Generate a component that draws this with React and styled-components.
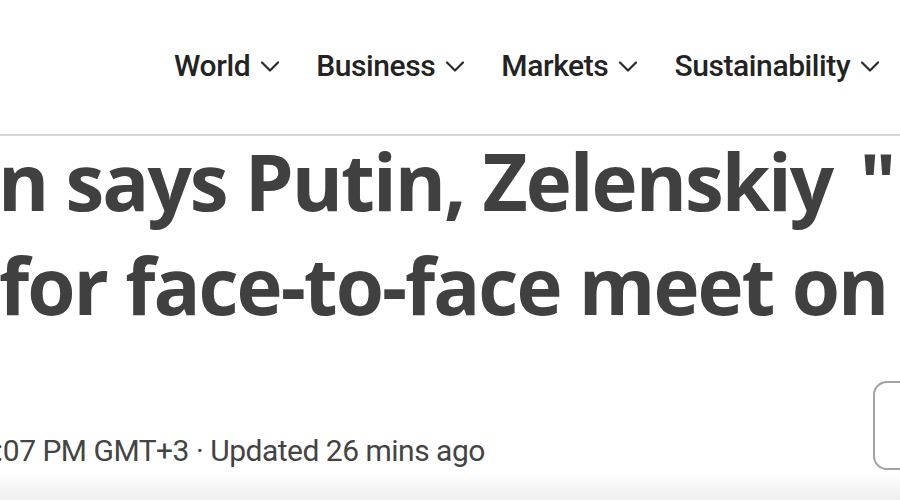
import React from "react";
import styled, { createGlobalStyle } from "styled-components";

const GlobalStyle = createGlobalStyle`
  html, body {
    margin: 0;
    padding: 0;
    background: #ffffff;
    overflow: hidden;
  }
`;

const Page = styled.div`
  width: 900px;
  height: 500px;
  display: flex;
  flex-direction: column;
  overflow: hidden;
  background: #fff;
`;

const Header = styled.header`
  height: 136px;
  display: flex;
  align-items: center;
  padding-left: 174px;
  padding-bottom: 4px;
  box-sizing: border-box;
  border-bottom: 2px solid #d6d6d6;
  gap: 35px;
  flex-shrink: 0;
`;

const NavItem = styled.div`
  display: flex;
  align-items: center;
  gap: 9px;
  font-family: Roboto, "Liberation Sans", sans-serif;
  font-weight: 500;
  font-size: 30px;
  letter-spacing: -0.4px;
  color: #232323;
  white-space: nowrap;
`;

const Chevron = styled.svg`
  width: 22px;
  height: 22px;
  margin-top: 2px;
  flex-shrink: 0;
`;

const Headline = styled.h1`
  margin: -7px 0 0 0;
  font-family: "Open Sans", "Noto Sans", sans-serif;
  font-weight: 700;
  font-size: 78px;
  line-height: 104px;
  letter-spacing: -2px;
  color: #404040;
  white-space: nowrap;
  overflow: hidden;
  flex-shrink: 0;
`;

const Line = styled.span`
  display: block;
  margin-left: ${(p) => p.shift || 0}px;
`;

const Quote = styled.span`
  letter-spacing: 0;
  margin-left: 9px;
`;

const MetaRow = styled.div`
  display: flex;
  align-items: flex-end;
  margin-top: 44px;
  overflow: hidden;
  flex-shrink: 0;
`;

const Meta = styled.p`
  margin: 0 0 1px -4px;
  font-family: Roboto, "Liberation Sans", sans-serif;
  font-weight: 400;
  font-size: 30px;
  line-height: 36px;
  letter-spacing: -0.5px;
  color: #444;
  white-space: nowrap;
`;

const Action = styled.div`
  margin-left: auto;
  margin-right: -119px;
  width: 146px;
  height: 89px;
  box-sizing: border-box;
  border: 2px solid #a3a3a3;
  border-radius: 14px;
  flex-shrink: 0;
`;

const Fade = styled.div`
  flex: 1;
  margin-top: 2px;
  background: linear-gradient(#ffffff, #efefef);
`;

const nav = ["World", "Business", "Markets", "Sustainability"];

function Caret() {
  return (
    <Chevron viewBox="0 0 22 22" fill="none" stroke="#2a2a2a" strokeWidth="2.2" strokeLinecap="round" strokeLinejoin="round">
      <path d="M3 7.5 L11 15.5 L19 7.5" />
    </Chevron>
  );
}

export default function App() {
  return (
    <>
      <GlobalStyle />
      <Page>
        <Header>
          {nav.map((n) => (
            <NavItem key={n}>
              {n}
              <Caret />
            </NavItem>
          ))}
        </Header>
        <Headline>
          <Line shift={-2}>n says Putin, Zelenskiy <Quote>"</Quote></Line>
          <Line shift={-1}>for face-to-face meet on</Line>
        </Headline>
        <MetaRow>
          <Meta>:07 PM GMT+3 · Updated 26 mins ago</Meta>
          <Action />
        </MetaRow>
        <Fade />
      </Page>
    </>
  );
}
